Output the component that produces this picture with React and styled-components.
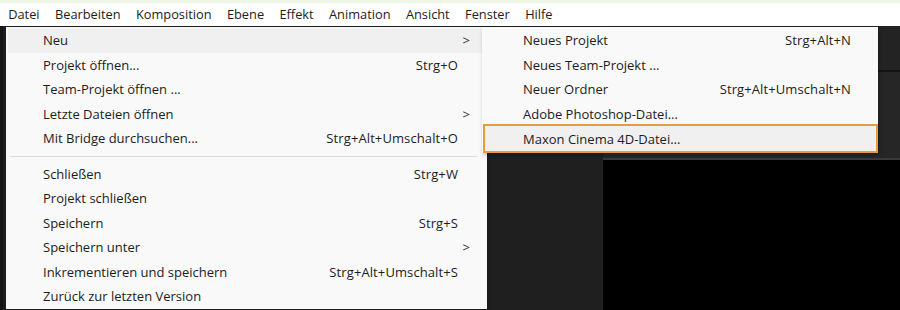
import React from 'react';
import styled, { createGlobalStyle } from 'styled-components';

const GlobalStyle = createGlobalStyle`
  html, body {
    margin: 0;
    padding: 0;
    background: #ffffff;
  }
  body {
    font-family: "Open Sans", "Noto Sans", "Liberation Sans", sans-serif;
    color: #1c1c1c;
  }
`;

const Screen = styled.div`
  position: relative;
  width: 900px;
  height: 310px;
  overflow: hidden;
  display: flex;
  flex-direction: column;
  background: #ffffff;
`;

const TopStrip = styled.div`
  height: 3px;
  background: #eef5e6;
`;

const MenuBar = styled.div`
  display: flex;
  align-items: center;
  height: 23px;
  padding-left: 0.5px;
  background: #ffffff;
  font-size: 12.8px;
`;

const BarItem = styled.div`
  padding: 0 7.7px;
  line-height: 23px;
  white-space: nowrap;
`;

const Workspace = styled.div`
  flex: 1;
  display: grid;
  grid-template-columns: 603px 1fr;
  background: #1f1f1f;
`;

const LeftPanel = styled.div`
  background: #1f1f1f;
  border-left: 3px solid #151515;
`;

const RightColumn = styled.div`
  display: grid;
  grid-template-rows: 46px 88px 1fr;
`;

const PanelTop = styled.div`
  background: #232323;
  border-bottom: 2px solid #141414;
`;

const PanelMid = styled.div`
  background: #262626;
  border-bottom: 2px solid #3a3a3a;
`;

const Viewer = styled.div`
  background: #000000;
`;

const Dropdown = styled.div`
  position: absolute;
  top: ${p => p.$top}px;
  left: ${p => p.$left}px;
  width: ${p => p.$width}px;
  background: #f9f9f9;
  padding: 1px 2px 0 2px;
  box-sizing: border-box;
  box-shadow: 1px 2px 4px rgba(0, 0, 0, 0.25);
  font-size: 13px;
`;

const Row = styled.div`
  display: flex;
  align-items: center;
  height: ${p => (p.$outlined ? 29 : 24.5)}px;
  padding-left: ${p => p.$indent}px;
  padding-right: ${p => p.$right}px;
  box-sizing: border-box;
  background: ${p => (p.$active || p.$outlined ? '#f0f0f0' : 'transparent')};
  border: ${p => (p.$outlined ? '2px solid #e99a3a' : 'none')};
  margin: ${p => (p.$outlined ? '-2px -2px 0 -1px' : '0')};
  white-space: nowrap;
`;

const Label = styled.span`
  flex: 1;
`;

const Shortcut = styled.span`
  letter-spacing: 0.1px;
`;

const Arrow = styled.span`
  width: 12px;
  text-align: right;
  margin-right: -12px;
  font-size: 13px;
  color: #333;
`;

const Separator = styled.div`
  height: 1px;
  margin: 5px 8px 5px 2px;
  background: #dcdcdc;
`;

const barItems = ['Datei', 'Bearbeiten', 'Komposition', 'Ebene', 'Effekt', 'Animation', 'Ansicht', 'Fenster', 'Hilfe'];

const fileTop = [
  { label: 'Neu', sub: true, active: true },
  { label: 'Projekt öffnen...', key: 'Strg+O' },
  { label: 'Team-Projekt öffnen ...' },
  { label: 'Letzte Dateien öffnen', sub: true },
  { label: 'Mit Bridge durchsuchen...', key: 'Strg+Alt+Umschalt+O' },
];

const fileBottom = [
  { label: 'Schließen', key: 'Strg+W' },
  { label: 'Projekt schließen' },
  { label: 'Speichern', key: 'Strg+S' },
  { label: 'Speichern unter', sub: true },
  { label: 'Inkrementieren und speichern', key: 'Strg+Alt+Umschalt+S' },
  { label: 'Zurück zur letzten Version' },
];

const newItems = [
  { label: 'Neues Projekt', key: 'Strg+Alt+N' },
  { label: 'Neues Team-Projekt ...' },
  { label: 'Neuer Ordner', key: 'Strg+Alt+Umschalt+N' },
  { label: 'Adobe Photoshop-Datei...' },
  { label: 'Maxon Cinema 4D-Datei...', outlined: true },
];

const FileRow = ({ item }) => (
  <Row $indent={35} $right={27} $active={item.active}>
    <Label>{item.label}</Label>
    {item.key && <Shortcut>{item.key}</Shortcut>}
    {item.sub ? <Arrow>&gt;</Arrow> : <Arrow />}
  </Row>
);

const App = () => (
  <>
    <GlobalStyle />
    <Screen>
      <TopStrip />
      <MenuBar>
        {barItems.map(name => (
          <BarItem key={name}>{name}</BarItem>
        ))}
      </MenuBar>
      <Workspace>
        <LeftPanel />
        <RightColumn>
          <PanelTop />
          <PanelMid />
          <Viewer />
        </RightColumn>
      </Workspace>

      <Dropdown $top={27} $left={6} $width={481}>
        {fileTop.map(item => <FileRow key={item.label} item={item} />)}
        <Separator />
        {fileBottom.map(item => <FileRow key={item.label} item={item} />)}
      </Dropdown>

      <Dropdown $top={27} $left={482} $width={396}>
        {newItems.map(item => (
          <Row key={item.label} $indent={item.outlined ? 38 : 39} $right={25} $outlined={item.outlined}>
            <Label>{item.label}</Label>
            {item.key && <Shortcut>{item.key}</Shortcut>}
          </Row>
        ))}
      </Dropdown>
    </Screen>
  </>
);

export default App;
